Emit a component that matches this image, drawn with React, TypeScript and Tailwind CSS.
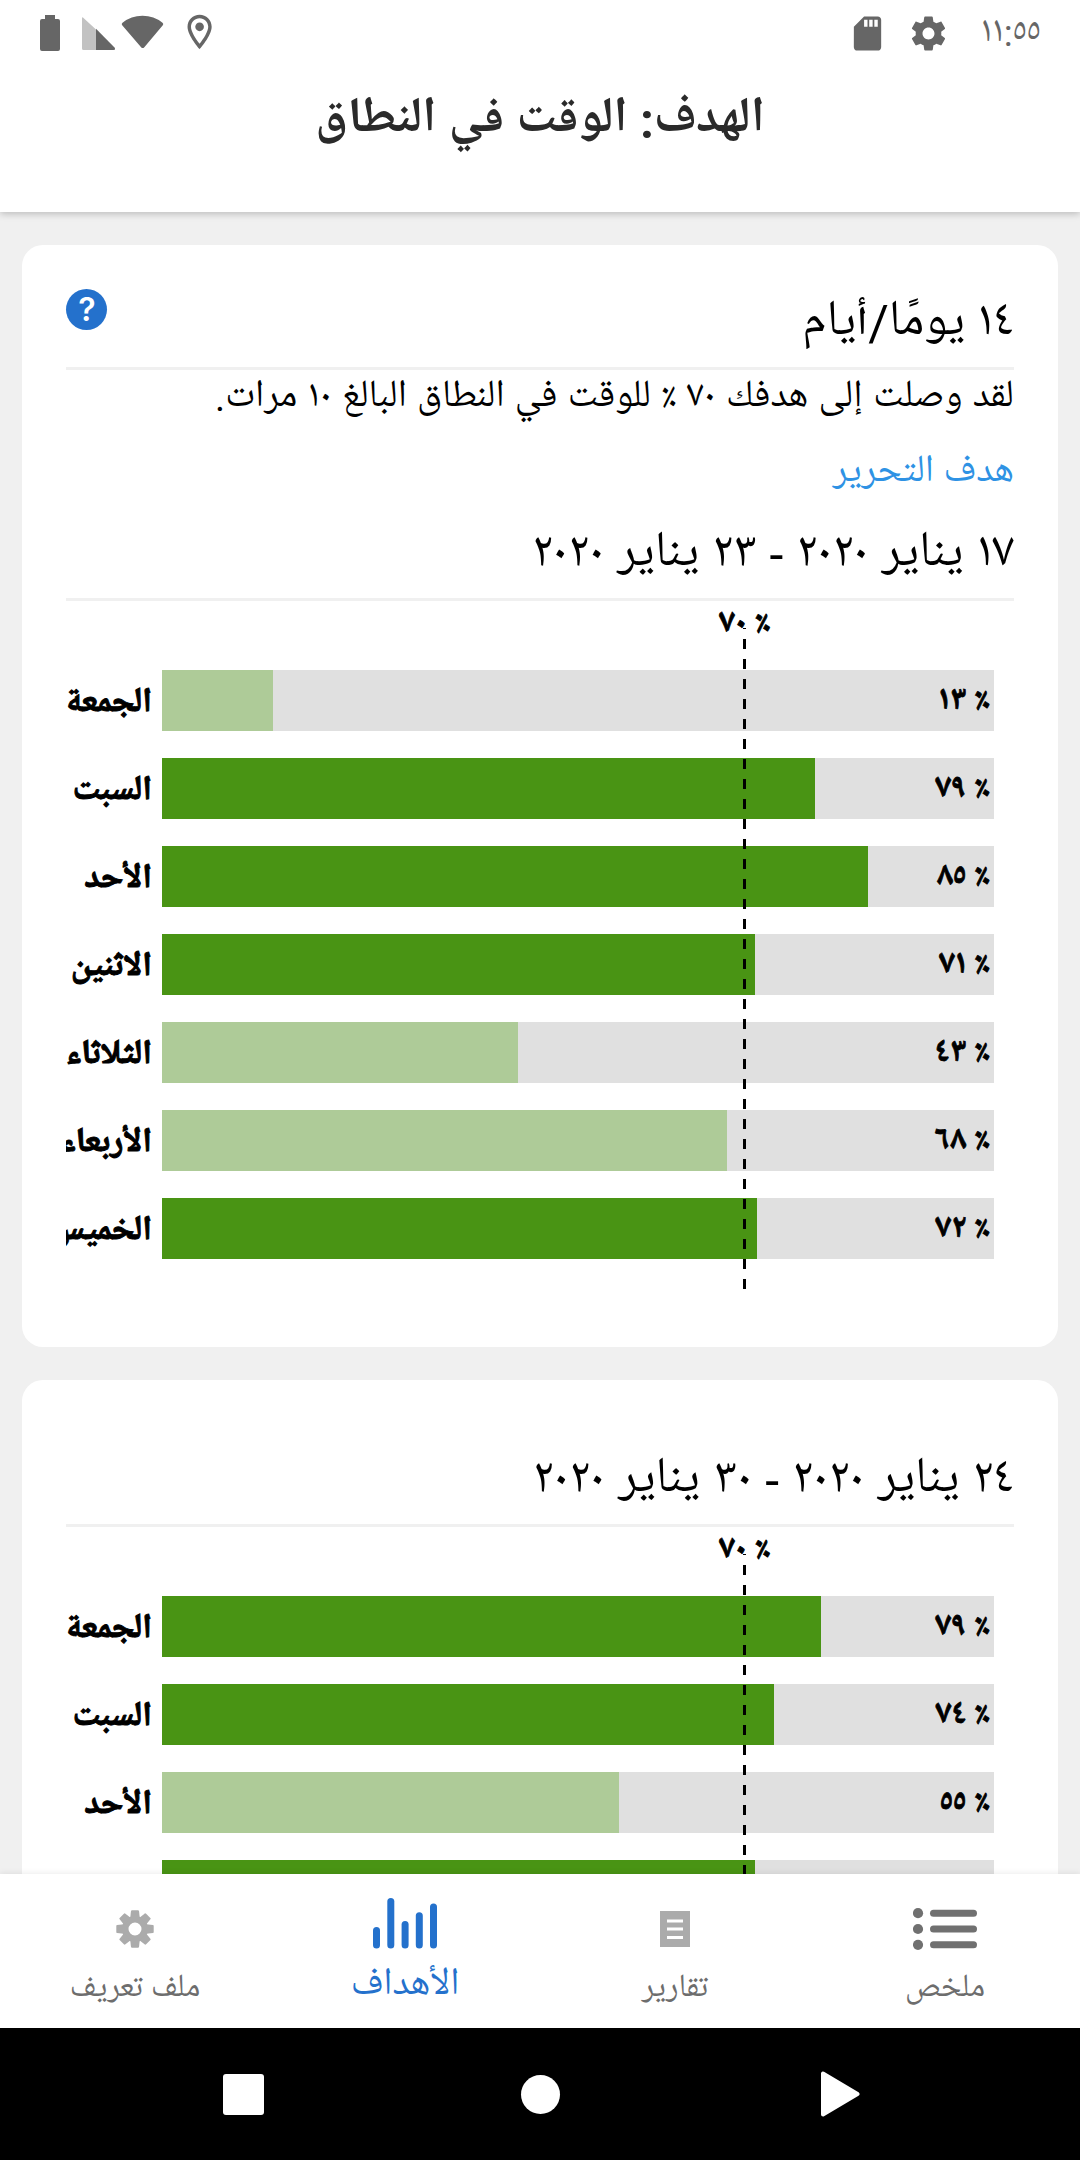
import React from 'react';

interface DayEntry {
  day: string;
  label: string;
  fill: number;
  reached: boolean;
}

const GOAL_LABEL = '٧٠ ٪';

const FIRST_WEEK: DayEntry[] = [
  { day: 'الجمعة', label: '١٣ ٪', fill: 13.4, reached: false },
  { day: 'السبت', label: '٧٩ ٪', fill: 78.5, reached: true },
  { day: 'الأحد', label: '٨٥ ٪', fill: 84.9, reached: true },
  { day: 'الاثنين', label: '٧١ ٪', fill: 71.3, reached: true },
  { day: 'الثلاثاء', label: '٤٣ ٪', fill: 42.8, reached: false },
  { day: 'الأربعاء', label: '٦٨ ٪', fill: 67.9, reached: false },
  { day: 'الخميس', label: '٧٢ ٪', fill: 71.5, reached: true },
];

const SECOND_WEEK: DayEntry[] = [
  { day: 'الجمعة', label: '٧٩ ٪', fill: 79.2, reached: true },
  { day: 'السبت', label: '٧٤ ٪', fill: 73.5, reached: true },
  { day: 'الأحد', label: '٥٥ ٪', fill: 54.9, reached: false },
  { day: 'الاثنين', label: '٧١ ٪', fill: 71.3, reached: true },
];

const StatusBar = () => (
  <div className="flex h-[66px] items-start justify-between text-[#666666]">
    <div className="flex">
      <svg width="220" height="66" viewBox="0 0 220 66" fill="currentColor">
        <path d="M45 15h10v4h3a2 2 0 0 1 2 2v28a2 2 0 0 1-2 2H42a2 2 0 0 1-2-2V21a2 2 0 0 1 2-2h3z" />
        <path d="M82 18.500q0-2 1.500-.6L96 29.500V50H83.500q-1.500 0-1.500-1.500z" fill="#c2c2c2" />
        <path d="M96 28.800 114.500 47.500q1.500 2.500-1 2.500H96z" />
        <path d="M122.200 25.300q-1.200-1.500.3-2.600Q131 15.700 142.500 15.700t20 7q1.500 1.100.3 2.600L144.300 47.200q-1.600 1.800-3.200 0z" />
        <g transform="translate(178.900 11.300) scale(1.725)">
          <path d="M12 2C8.130 2 5 5.130 5 9c0 5.250 7 13 7 13s7-7.750 7-13c0-3.870-3.130-7-7-7zM7 9c0-2.760 2.240-5 5-5s5 2.240 5 5c0 2.880-2.880 7.190-5 9.880C9.920 16.210 7 11.850 7 9z" />
          <circle cx="12" cy="9" r="2.500" />
        </g>
      </svg>
    </div>
    <div className="flex pt-[13px]">
      <svg width="41" height="41" viewBox="0 0 24 24" fill="currentColor">
        <path d="M18 2h-8L4.020 8 4 20c0 1.100.9 2 2 2h12c1.100 0 2-.9 2-2V4c0-1.100-.9-2-2-2zm-6 6h-2V4h2v4zm3 0h-2V4h2v4zm3 0h-2V4h2v4z" />
      </svg>
      <svg className="ml-5" width="41" height="41" viewBox="0 0 24 24" fill="currentColor">
        <path d="M19.430 12.980c.04-.32.07-.64.07-.98s-.03-.66-.07-.98l2.110-1.650c.19-.15.24-.42.12-.64l-2-3.460c-.12-.22-.39-.3-.61-.22l-2.490 1c-.52-.4-1.080-.73-1.690-.98l-.38-2.650C14.460 2.180 14.250 2 14 2h-4c-.25 0-.46.18-.49.42l-.38 2.650c-.61.25-1.170.59-1.690.98l-2.490-1c-.23-.09-.49 0-.61.22l-2 3.460c-.13.22-.07.49.12.64l2.110 1.650c-.04.32-.07.65-.07.98s.03.66.07.98l-2.110 1.650c-.19.15-.24.42-.12.64l2 3.460c.12.22.39.3.61.22l2.490-1c.52.4 1.080.73 1.690.98l.38 2.650c.03.24.24.42.49.42h4c.25 0 .46-.18.49-.42l.38-2.650c.61-.25 1.170-.59 1.690-.98l2.490 1c.23.09.49 0 .61-.22l2-3.460c.12-.22.07-.49-.12-.64l-2.110-1.650zM12 15.500c-1.930 0-3.500-1.570-3.500-3.500s1.570-3.500 3.500-3.500 3.500 1.570 3.500 3.500-1.570 3.500-3.500 3.500z" />
      </svg>
      <span className="mt-[3px] mr-[39px] ml-[31px] text-[37px] leading-[36px]">١١:٥٥</span>
    </div>
  </div>
);

const WeekHeading = ({ children }: { children: React.ReactNode }) => (
  <h2
    dir="rtl"
    className="h-[72px] border-b-[3px] border-[#f0f0f0] text-[50px] leading-[52px] whitespace-nowrap [word-spacing:0.500px]"
  >
    {children}
  </h2>
);

const WeekChart = ({ days }: { days: DayEntry[] }) => (
  <div className="relative pt-[69px]">
    <div className="flex flex-col gap-[27.500px]">
      {days.map((entry) => (
        <div key={entry.day} className="flex h-[60.500px] items-center">
          <div className="flex w-[86px] justify-end overflow-hidden pt-[8px]">
            <span
              dir="rtl"
              className="text-[34.500px] leading-[60px] font-bold whitespace-nowrap [-webkit-text-stroke:1px_#000]"
            >
              {entry.day}
            </span>
          </div>
          <div className="relative ml-[10px] h-full w-[832px] bg-[#e0e0e0]">
            <div
              className={`h-full ${entry.reached ? 'bg-[#499414]' : 'bg-[#aecb98]'}`}
              style={{ width: `${entry.fill}%` }}
            />
            <span className="absolute inset-y-0 right-[4px] text-[33px] leading-[64px] font-bold [-webkit-text-stroke:0.800px_#000]">
              {entry.label}
            </span>
          </div>
        </div>
      ))}
    </div>
    <svg className="absolute top-[18px] left-[677px]" width="3" height="670" viewBox="0 0 3 670">
      <path d="M1.500 0V670" stroke="#000" strokeWidth="3" strokeDasharray="10 10" />
    </svg>
    <span className="absolute top-0 left-[653px] h-[27px] bg-white text-[33px] leading-[48px] font-bold whitespace-nowrap [-webkit-text-stroke:0.800px_#000]">
      {GOAL_LABEL}
    </span>
  </div>
);

const ProfileIcon = () => (
  <svg width="38" height="38" viewBox="-19 -19 38 38" fill="#ababab">
    <path
      fillRule="evenodd"
      d="M-13 0a13 13 0 1 0 26 0a13 13 0 1 0-26 0zM-6.500 0a6.500 6.500 0 1 1 13 0a6.500 6.500 0 1 1-13 0z"
    />
    {[0, 45, 90, 135, 180, 225, 270, 315].map((angle) => (
      <path key={angle} transform={`rotate(${angle})`} d="M-4.800-11-4-18q.2-.7 1-.7h6q.8 0 1 .7L4.800-11z" />
    ))}
  </svg>
);

const GoalsIcon = () => (
  <svg width="64" height="51" viewBox="0 0 64 51" fill="#2471cc">
    <rect x="0" y="29" width="7" height="21.500" rx="3.500" />
    <rect x="14.300" y="0" width="7" height="50.500" rx="3.500" />
    <rect x="28.600" y="23" width="7" height="27.500" rx="3.500" />
    <rect x="42.800" y="14.300" width="7" height="36.200" rx="3.500" />
    <rect x="57" y="5.600" width="7" height="44.900" rx="3.500" />
  </svg>
);

const ReportsIcon = () => (
  <svg width="30" height="36" viewBox="0 0 30 36">
    <path d="M0 0h30v36H0z" fill="#ababab" />
    <path d="M7 8.500h16v3H7zM7 16.500h16v3H7zM7 25h16v3H7z" fill="#fff" />
  </svg>
);

const SummaryIcon = () => (
  <svg width="64" height="42" viewBox="0 0 64 42" fill="#707070">
    {[5.200, 21, 36.800].map((y) => (
      <g key={y}>
        <circle cx="5" cy={y} r="5.100" />
        <rect x="17" y={y - 3.500} width="47" height="7" rx="3.500" />
      </g>
    ))}
  </svg>
);

const TABS = [
  { label: 'ملف تعريف', icon: <ProfileIcon />, active: false },
  { label: 'الأهداف', icon: <GoalsIcon />, active: true },
  { label: 'تقارير', icon: <ReportsIcon />, active: false },
  { label: 'ملخص', icon: <SummaryIcon />, active: false },
];

export default function App() {
  return (
    <div className="flex h-[2160px] w-[1080px] flex-col overflow-hidden bg-[#f0f0f0] font-[Roboto,'Noto_Naskh_Arabic_UI','Noto_Naskh_Arabic','Noto_Sans_Arabic',sans-serif] text-black">
      <header className="relative z-10 h-[212px] shrink-0 bg-white shadow-[0_2px_7px_rgba(0,0,0,0.22)]">
        <StatusBar />
        <h1 dir="rtl" className="text-center text-[49.700px] leading-[110px] font-bold text-[#2a2a2a]">الهدف: الوقت في النطاق</h1>
      </header>

      <main className="min-h-0 flex-1 overflow-hidden px-[22px] pt-[33px]">
        <section className="h-[1102px] rounded-[21px] bg-white px-[44px]">
          <div className="flex h-[125px] items-start justify-between border-b-[3px] border-[#f0f0f0] pt-[44px]">
            <div className="flex size-[41px] items-center justify-center rounded-full bg-[#2471cc] pl-px font-[Inter] text-[32px] leading-none font-semibold text-white">
              ?
            </div>
            <h2 dir="rtl" className="text-[50px] leading-[70px]">١٤ يومًا/أيام</h2>
          </div>
          <p dir="rtl" className="h-[75px] text-[38.500px] leading-[56px] whitespace-nowrap [word-spacing:0.700px]">
            لقد وصلت إلى هدفك ٧٠ ٪ للوقت في النطاق البالغ ١٠ مرات.
          </p>
          <a dir="rtl" className="block h-[84px] text-[38.500px] leading-[56px] text-[#2e92e4]">هدف التحرير</a>
          <WeekHeading>١٧ يناير ٢٠٢٠ - ٢٣ يناير ٢٠٢٠</WeekHeading>
          <WeekChart days={FIRST_WEEK} />
        </section>

        <section className="mt-[33px] h-[1102px] rounded-[21px] bg-white px-[44px] pt-[75px]">
          <WeekHeading>٢٤ يناير ٢٠٢٠ - ٣٠ يناير ٢٠٢٠</WeekHeading>
          <WeekChart days={SECOND_WEEK} />
        </section>
      </main>

      <nav className="relative z-10 grid h-[154px] shrink-0 grid-cols-4 bg-white shadow-[0_-1px_6px_rgba(0,0,0,0.08)]">
        {TABS.map((tab) => (
          <div key={tab.label} className={`flex flex-col items-center ${tab.active ? 'text-[#2471cc]' : 'text-[#6d6d6d]'}`}>
            <div className={`flex items-center ${tab.active ? 'h-[98px]' : 'h-[110px]'}`}>{tab.icon}</div>
            <span
              dir="rtl"
              className={`leading-[54px] ${tab.active ? '-mt-[13px] text-[38.500px]' : '-mt-[22px] text-[32.500px]'}`}
            >
              {tab.label}
            </span>
          </div>
        ))}
      </nav>

      <div className="flex h-[132px] shrink-0 items-center bg-black">
        <div className="ml-[223px] size-[41px] rounded-[3px] bg-white" />
        <div className="ml-[257px] size-[39px] rounded-full bg-white" />
        <svg className="ml-[261px]" width="39" height="46" viewBox="0 0 39 46">
          <path d="M2 2.500v41L36.500 23z" fill="#fff" stroke="#fff" strokeWidth="4" strokeLinejoin="round" />
        </svg>
      </div>
    </div>
  );
}
